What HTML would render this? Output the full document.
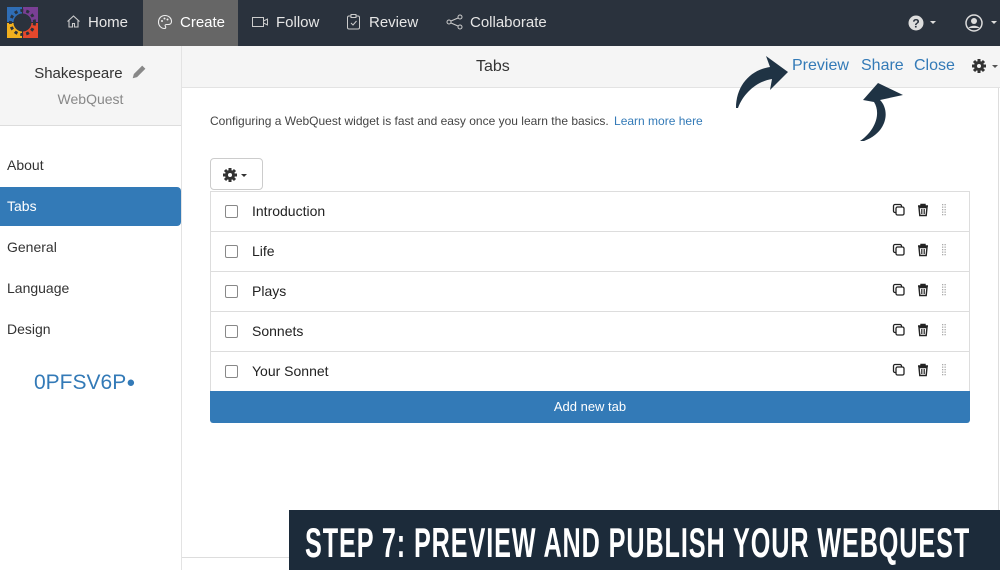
<!DOCTYPE html>
<html><head><meta charset="utf-8"><style>
*{box-sizing:border-box;margin:0;padding:0}
body{width:1000px;height:570px;overflow:hidden;font-family:"Liberation Sans",sans-serif;background:#fff;position:relative;color:#333}
.nav{position:absolute;left:0;top:0;width:1000px;height:46px;background:#2a323d}
.nav .it{position:absolute;top:0;height:46px;line-height:46px;color:#e6e6e6;font-size:15px}
.side{position:absolute;left:0;top:46px;width:182px;height:524px;border-right:1px solid #e3e3e3;background:#fff}
.sidetop{height:80px;background:#f5f5f5;border-bottom:1px solid #ddd;text-align:center}
.menu{position:absolute;left:0;width:181px;height:39px;line-height:39px;padding-left:7px;font-size:14px;color:#333}
.hdr{position:absolute;left:182px;top:46px;width:818px;height:42px;background:#f5f5f5;border-bottom:1px solid #e3e3e3}
.row{position:absolute;left:210px;width:760px;height:40px;border:1px solid #ddd;border-top:none;font-size:14px;line-height:39px}
.cb{position:absolute;left:14px;top:13px;width:13px;height:13px;border:1px solid #888;border-radius:2px}
.lbl{position:absolute;left:41px;color:#222}
</style></head><body>
<div class="nav">
<svg style="position:absolute;left:7px;top:7px" width="31" height="31" viewBox="0 0 31 31">
<rect x="0" y="0" width="15" height="15" fill="#2f6db5"/><rect x="16" y="0" width="15" height="15" fill="#7a3f95"/>
<rect x="0" y="16" width="15" height="15" fill="#f2b01e"/><rect x="16" y="16" width="15" height="15" fill="#e5482c"/>
<circle cx="15.5" cy="15.5" r="9" fill="#2a323d"/>
<circle cx="15.5" cy="15.5" r="12" fill="none" stroke="#2a323d" stroke-width="3" stroke-dasharray="3 3"/>
</svg>
<div class="it" style="left:66px"><svg width="15" height="15" viewBox="0 0 15 15" style="vertical-align:-2px;margin-right:7px"><path d="M1.5 7.5 7.5 2l6 5.5M3 6.5V13h3.5V9.5h2V13H12V6.5" fill="none" stroke="#ccc" stroke-width="1.1"/></svg>Home</div>
<div class="it" style="left:143px;width:95px;background:#666;padding-left:14px;color:#fff"><svg width="16" height="16" viewBox="0 0 16 16" style="vertical-align:-3px;margin-right:7px"><path d="M8 1.5C4 1.5 1.5 4.5 1.5 8s2.5 6.5 6 6.5c1.5 0 1.5-1.5.8-2.3-.6-.8 0-1.7 1-1.7h2c1.8 0 3.2-1.2 3.2-3C14.5 4 11.5 1.5 8 1.5z" fill="none" stroke="#eee" stroke-width="1.1"/><circle cx="5" cy="7" r="1" fill="#eee"/><circle cx="7.5" cy="4.5" r="1" fill="#eee"/><circle cx="10.5" cy="5.5" r="1" fill="#eee"/></svg>Create</div>
<div class="it" style="left:252px"><svg width="17" height="12" viewBox="0 0 17 12" style="vertical-align:-1px;margin-right:7px"><rect x=".5" y="1.5" width="11" height="9" fill="none" stroke="#ccc"/><path d="M11.5 5l4-2v6l-4-2" fill="none" stroke="#ccc"/></svg>Follow</div>
<div class="it" style="left:347px"><svg width="13" height="16" viewBox="0 0 13 16" style="vertical-align:-3px;margin-right:9px"><rect x=".5" y="2" width="12" height="13" rx="1.5" fill="none" stroke="#ccc"/><rect x="4" y=".5" width="5" height="3" fill="#2a323d" stroke="#ccc"/><path d="M4 9l2 2 3.5-4" fill="none" stroke="#ccc"/></svg>Review</div>
<div class="it" style="left:446px"><svg width="17" height="16" viewBox="0 0 17 16" style="vertical-align:-3px;margin-right:7px"><circle cx="3" cy="8" r="2" fill="none" stroke="#ccc"/><circle cx="14" cy="3" r="2" fill="none" stroke="#ccc"/><circle cx="14" cy="13" r="2" fill="none" stroke="#ccc"/><path d="M5 7l7-3M5 9l7 3" stroke="#ccc"/></svg>Collaborate</div>
<svg style="position:absolute;left:908px;top:15px" width="30" height="16" viewBox="0 0 30 16"><circle cx="8" cy="8" r="7.5" fill="#ddd"/><text x="8" y="12.5" font-size="12" font-weight="bold" text-anchor="middle" fill="#2a323d" font-family="Liberation Sans">?</text><path d="M22 6h6l-3 3z" fill="#ddd"/></svg>
<svg style="position:absolute;left:965px;top:14px" width="35" height="18" viewBox="0 0 35 18"><circle cx="9" cy="9" r="8" fill="none" stroke="#ddd" stroke-width="1.5"/><circle cx="9" cy="7" r="3" fill="#ddd"/><path d="M3.5 14c2-3 9-3 11 0" fill="#ddd"/><path d="M26 7h6l-3 3z" fill="#ddd"/></svg>
</div>

<div class="side">
<div class="sidetop">
<div style="padding-top:18px;font-size:15px;color:#333">Shakespeare <svg width="16" height="16" viewBox="0 0 14 14" style="vertical-align:-2px;margin-left:4px"><path d="M1.5 12.5l1-3.8L9.8 1.4l2.8 2.8-7.3 7.3z" fill="#888"/></svg></div>
<div style="padding-top:9px;font-size:14px;color:#888">WebQuest</div>
</div>
<div class="menu" style="top:100px">About</div>
<div class="menu" style="top:141px;background:#337ab7;color:#fff;border-radius:0 4px 4px 0">Tabs</div>
<div class="menu" style="top:182px">General</div>
<div class="menu" style="top:223px">Language</div>
<div class="menu" style="top:264px">Design</div>
<div style="position:absolute;left:34px;top:325px;font-size:21px;color:#337ab7">0PFSV6P<span style="font-size:15px;vertical-align:2px">●</span></div>
</div>

<div class="hdr">
<div style="position:absolute;left:294px;top:12px;font-size:16px;color:#333">Tabs</div>
<div style="position:absolute;left:610px;top:11px;font-size:16px;color:#337ab7">Preview</div>
<div style="position:absolute;left:679px;top:11px;font-size:16px;color:#337ab7">Share</div>
<div style="position:absolute;left:732px;top:11px;font-size:16px;color:#337ab7">Close</div>
<svg style="position:absolute;left:789px;top:12px" width="30" height="18" viewBox="0 0 30 18"><g fill="#333"><circle cx="8" cy="8" r="5"/><g stroke="#333" stroke-width="3"><path d="M8 1v14M1 8h14M3 3l10 10M13 3 3 13"/></g><circle cx="8" cy="8" r="2" fill="#f5f5f5"/></g><path d="M21 7h6l-3 3z" fill="#555"/></svg>
</div>
<div style="position:absolute;left:998px;top:88px;width:1px;height:422px;background:#ddd"></div>
<div style="position:absolute;left:182px;top:557px;width:110px;height:1px;background:#ddd"></div>

<div style="position:absolute;left:210px;top:114px;font-size:12px;color:#444">Configuring a WebQuest widget is fast and easy once you learn the basics. <span style="color:#337ab7;margin-left:2px">Learn more here</span></div>

<div style="position:absolute;left:210px;top:158px;width:53px;height:32px;border:1px solid #ccc;border-radius:4px;background:#fff">
<svg style="position:absolute;left:11px;top:8px" width="30" height="16" viewBox="0 0 30 16"><g><circle cx="8" cy="8" r="5" fill="#333"/><g stroke="#333" stroke-width="3"><path d="M8 1v14M1 8h14M3 3l10 10M13 3 3 13"/></g><circle cx="8" cy="8" r="2" fill="#fff"/></g><path d="M19 7h6l-3 3z" fill="#333"/></svg>
</div>
<div style="position:absolute;left:210px;top:191px;width:760px;height:1px;background:#ddd"></div>

<div class="row" style="top:192px"><div class="cb"></div><div class="lbl">Introduction</div></div>
<div class="row" style="top:232px"><div class="cb"></div><div class="lbl">Life</div></div>
<div class="row" style="top:272px"><div class="cb"></div><div class="lbl">Plays</div></div>
<div class="row" style="top:312px"><div class="cb"></div><div class="lbl">Sonnets</div></div>
<div class="row" style="top:352px"><div class="cb"></div><div class="lbl">Your Sonnet</div></div>

<svg style="position:absolute;left:892px;top:192px" width="60" height="200" viewBox="0 0 60 200">
<defs><g id="ics">
<rect x="1.5" y="12.5" width="8" height="8" rx="1.5" fill="none" stroke="#222" stroke-width="1.3"/>
<rect x="4" y="15" width="8" height="8" rx="1.5" fill="#fff" stroke="#222" stroke-width="1.3"/>
<path d="M26 14h10M29 14v-1.5h4V14M27 15.5l.8 8h6.4l.8-8z" fill="none" stroke="#222" stroke-width="1.4"/>
<path d="M29.5 17v5M31 17v5M32.5 17v5" stroke="#222" stroke-width=".8"/>
<g fill="#aaa"><rect x="50" y="12" width="1.3" height="1.3"/><rect x="52.5" y="12" width="1.3" height="1.3"/><rect x="50" y="14.5" width="1.3" height="1.3"/><rect x="52.5" y="14.5" width="1.3" height="1.3"/><rect x="50" y="17" width="1.3" height="1.3"/><rect x="52.5" y="17" width="1.3" height="1.3"/><rect x="50" y="19.5" width="1.3" height="1.3"/><rect x="52.5" y="19.5" width="1.3" height="1.3"/><rect x="50" y="22" width="1.3" height="1.3"/><rect x="52.5" y="22" width="1.3" height="1.3"/></g>
</g></defs>
<use href="#ics"/><use href="#ics" y="40"/><use href="#ics" y="80"/><use href="#ics" y="120"/><use href="#ics" y="160"/>
</svg>

<div style="position:absolute;left:210px;top:391px;width:760px;height:32px;background:#337ab7;color:#fff;font-size:13px;text-align:center;line-height:32px;border-radius:0 0 3px 3px">Add new tab</div>

<svg style="position:absolute;left:730px;top:50px" width="180" height="95" viewBox="0 0 180 95">
<path d="M6 58 C6 36 20 20 40 17 L36 6 L58 22 L40 40 L42 29 C28 31 14 42 8 58 Z" fill="#1f3344"/>
<path d="M134 91 C158 82 160 60 150 50 L173 45 L148 33 L133 50 L144 52 C151 63 146 80 130 91 Z" fill="#1f3344"/>
</svg>

<div style="position:absolute;left:289px;top:510px;width:711px;height:60px;background:#1c2b3a;overflow:hidden">
<div style="position:absolute;left:16px;top:9px;font-family:'Liberation Sans',sans-serif;font-weight:bold;font-size:42px;color:#fff;white-space:nowrap;transform:scaleX(0.6);transform-origin:0 0;letter-spacing:1.5px;line-height:48px">STEP 7: PREVIEW AND PUBLISH YOUR WEBQUEST</div>
</div>
</body></html>
